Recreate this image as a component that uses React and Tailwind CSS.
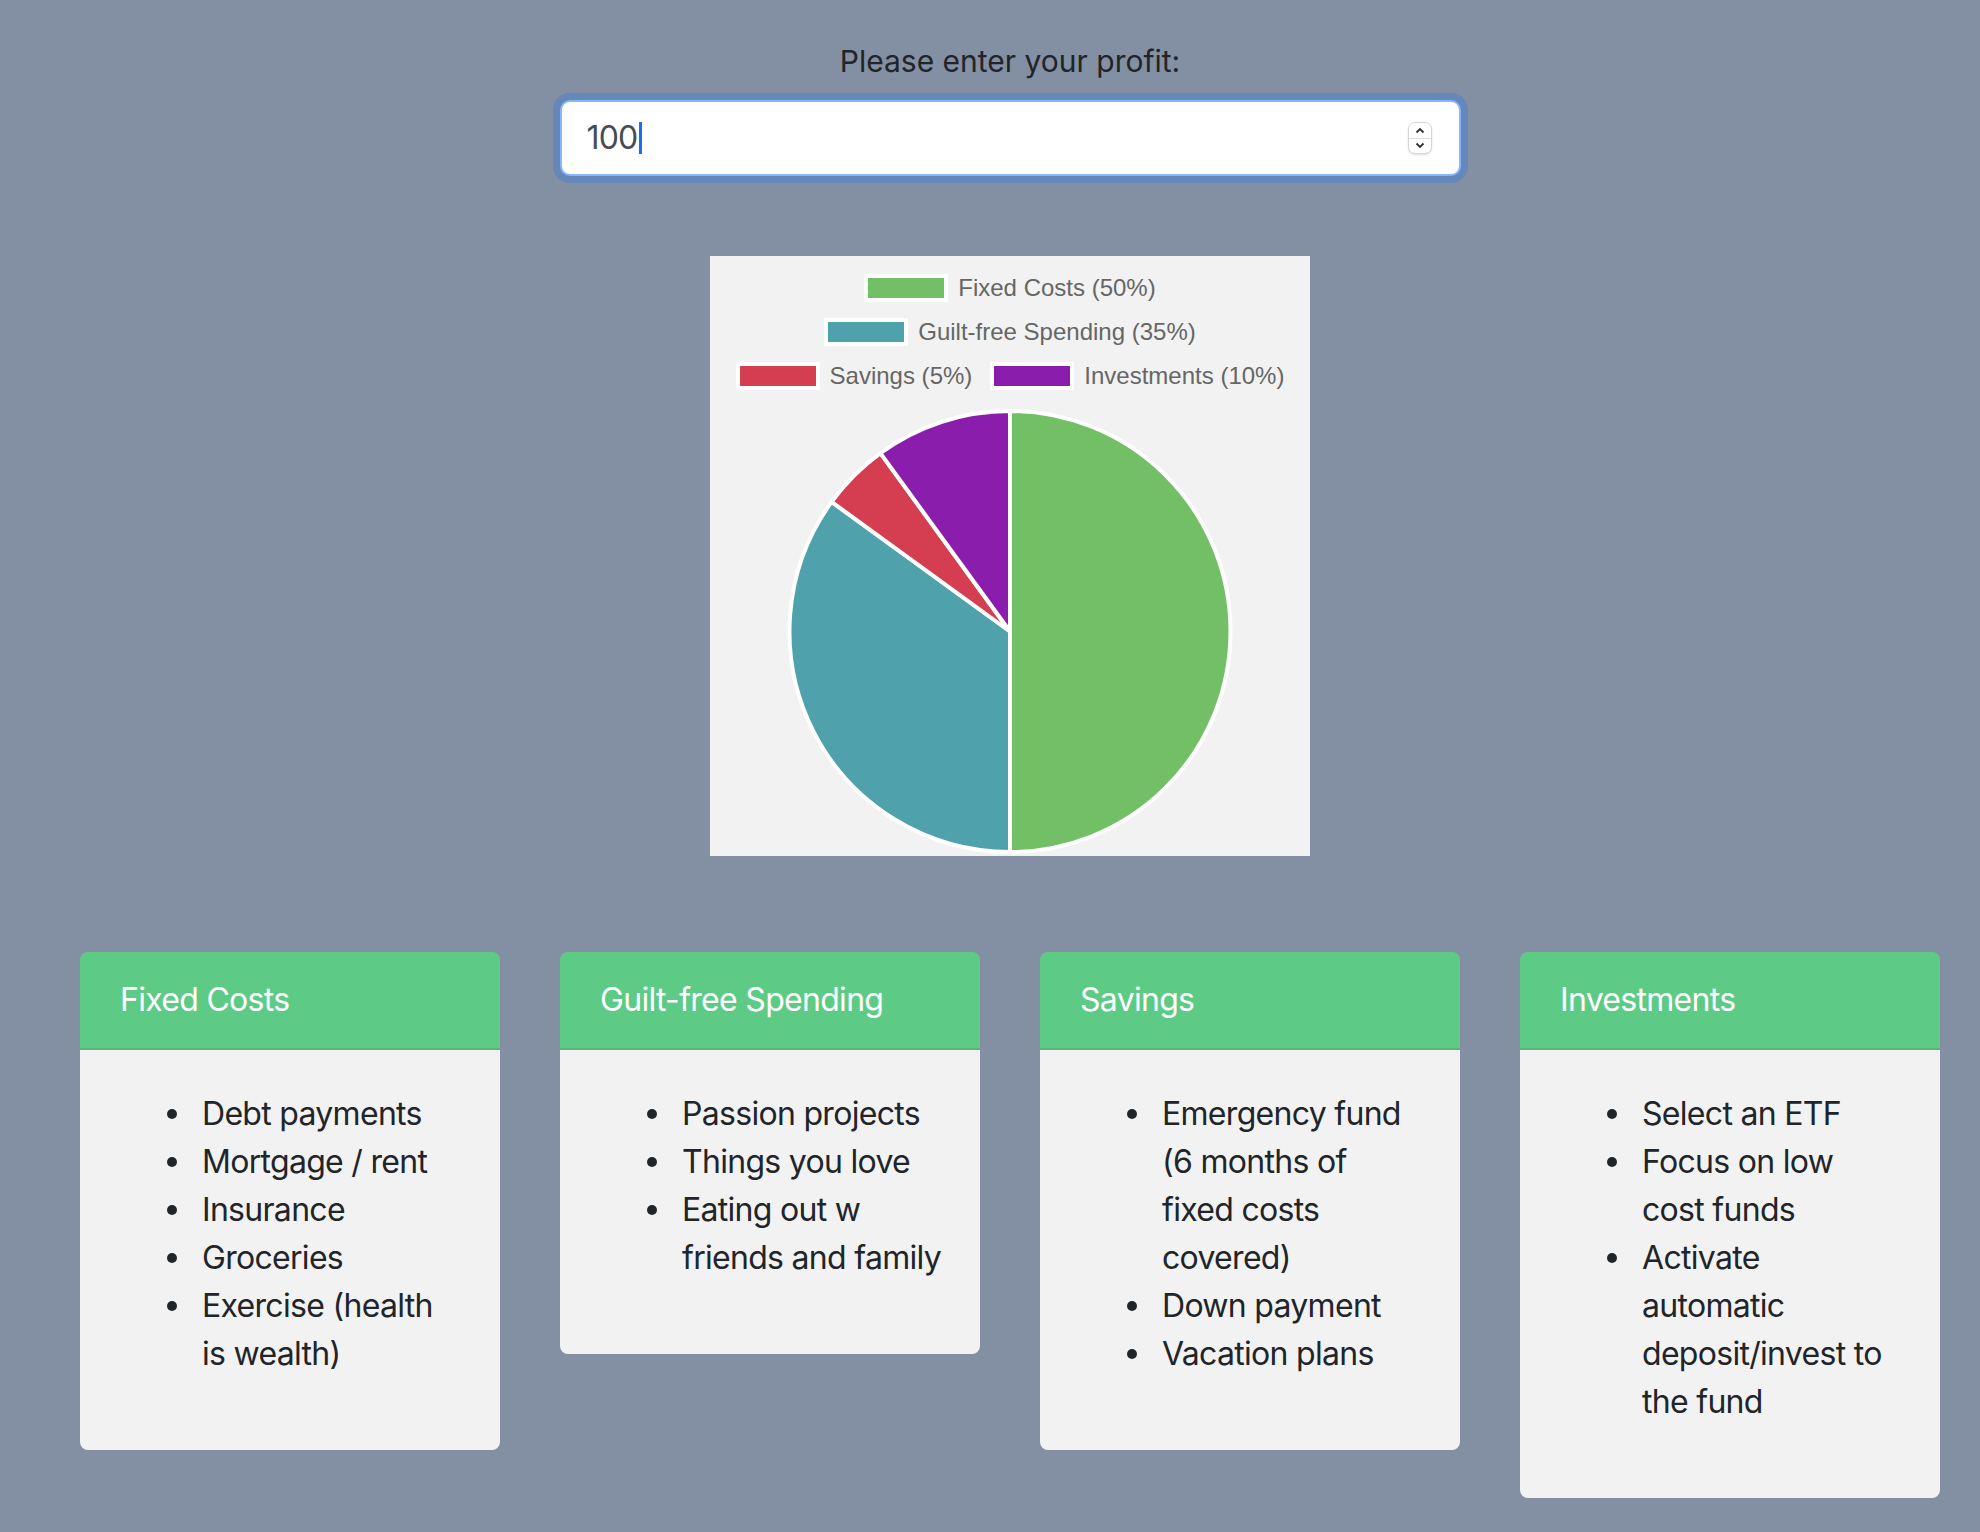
import React from 'react';

const slices = [
  { label: 'Fixed Costs', pct: 50, color: '#72bf66' },
  { label: 'Guilt-free Spending', pct: 35, color: '#4fa1ac' },
  { label: 'Savings', pct: 5, color: '#d53d51' },
  { label: 'Investments', pct: 10, color: '#8a1dab' },
];

const cards = [
  {
    title: 'Fixed Costs',
    items: [['Debt payments'], ['Mortgage / rent'], ['Insurance'], ['Groceries'], ['Exercise (health', 'is wealth)']],
  },
  {
    title: 'Guilt-free Spending',
    items: [['Passion projects'], ['Things you love'], ['Eating out w', 'friends and family']],
  },
  {
    title: 'Savings',
    items: [['Emergency fund', '(6 months of', 'fixed costs', 'covered)'], ['Down payment'], ['Vacation plans']],
  },
  {
    title: 'Investments',
    items: [['Select an ETF'], ['Focus on low', 'cost funds'], ['Activate', 'automatic', 'deposit/invest to', 'the fund']],
  },
];

// point on circle, angle in degrees clockwise from the top
const pt = (cx, cy, r, deg) => {
  const a = (deg * Math.PI) / 180;
  return [cx + r * Math.sin(a), cy - r * Math.cos(a)];
};

const PieChart = () => {
  const cx = 300;
  const cy = 241.5;
  const r = 220.5;
  let start = 0;
  const paths = slices.map((s) => {
    const end = start + (s.pct / 100) * 360;
    const [x1, y1] = pt(cx, cy, r, start);
    const [x2, y2] = pt(cx, cy, r, end);
    const large = end - start > 180 ? 1 : 0;
    const d = `M ${cx} ${cy} L ${x1} ${y1} A ${r} ${r} 0 ${large} 1 ${x2} ${y2} Z`;
    start = end;
    return <path key={s.label} d={d} fill={s.color} stroke="#ffffff" strokeWidth="4" strokeLinejoin="round" />;
  });
  return (
    <svg width="600" height="466" viewBox="0 0 600 466">
      {paths}
    </svg>
  );
};

const LegendItem = ({ s }) => (
  <div className="flex items-center h-[28px]">
    <span className="w-[84px] h-[28px] border-4 border-white" style={{ backgroundColor: s.color }} />
    <span className="ml-[10px] text-[24px] leading-[28px] text-[#666666]">
      {s.label} ({s.pct}%)
    </span>
  </div>
);

const Spinner = () => (
  <div className="w-[24px] h-[32px] rounded-[7px] border border-[#d6d6d6] bg-white flex flex-col shadow-sm">
    <div className="flex-1 flex items-center justify-center border-b border-[#e2e2e2]">
      <svg width="10" height="7" viewBox="0 0 10 7">
        <path d="M1.5 5.5 L5 2 L8.5 5.5" fill="none" stroke="#333" strokeWidth="1.8" />
      </svg>
    </div>
    <div className="flex-1 flex items-center justify-center">
      <svg width="10" height="7" viewBox="0 0 10 7">
        <path d="M1.5 1.5 L5 5 L8.5 1.5" fill="none" stroke="#333" strokeWidth="1.8" />
      </svg>
    </div>
  </div>
);

export default function App() {
  return (
    <div
      className="min-h-screen bg-[#838fa3] pl-[80px] pr-[40px] pt-[37px] pb-[40px]"
      style={{ fontFamily: 'Inter, "Noto Sans", sans-serif' }}
    >
      <div className="flex flex-col items-center">
        <label className="text-[30px] leading-[48px] text-[#212529]">Please enter your profit:</label>

        <div className="mt-[15px] w-[901px] h-[76px] rounded-[10px] border-2 border-[#86b7fe] bg-white shadow-[0_0_0_7px_rgba(13,110,253,0.25)] flex items-center pl-[25px] pr-[27px]">
          <span className="text-[32px] leading-none text-[#474c52] tracking-[-0.8px]">100</span>
          <span className="ml-[1px] w-[3px] h-[32px] bg-[#1a6fe8]" />
          <div className="flex-1" />
          <Spinner />
        </div>

        <div className="mt-[80px] w-[600px] h-[600px] bg-[#f2f2f2] flex flex-col items-center pt-[18px]">
          <div
            className="flex flex-col items-center gap-[16px]"
            style={{ fontFamily: '"Liberation Sans", Arial, sans-serif' }}
          >
            <div className="flex">
              <LegendItem s={slices[0]} />
            </div>
            <div className="flex">
              <LegendItem s={slices[1]} />
            </div>
            <div className="flex gap-[18px]">
              <LegendItem s={slices[2]} />
              <LegendItem s={slices[3]} />
            </div>
          </div>
          <PieChart />
        </div>
      </div>

      <div className="mt-[96px] flex items-start gap-[60px]">
        {cards.map((c) => (
          <div key={c.title} className="w-[420px] rounded-[8px] overflow-hidden">
            <div className="bg-[#5dcb85] border-b-2 border-[#55b97a] px-[40px] py-[24px] text-[32px] leading-[48px] tracking-[-0.7px] text-white">
              {c.title}
            </div>
            <div className="bg-[#f2f2f2] p-[40px]">
              <ul className="pl-[47px] mb-[32px] text-[32px] leading-[48px] tracking-[-0.7px] text-[#212529]">
                {c.items.map((lines, i) => (
                  <li key={i} className="flex whitespace-nowrap">
                    <span className="w-[35px] shrink-0 h-[48px] flex items-center">
                      <span className="w-[10px] h-[10px] rounded-full bg-[#212529]" />
                    </span>
                    <span>
                      {lines.map((l, j) => (
                        <React.Fragment key={j}>
                          {j > 0 && <br />}
                          {l}
                        </React.Fragment>
                      ))}
                    </span>
                  </li>
                ))}
              </ul>
            </div>
          </div>
        ))}
      </div>
    </div>
  );
}
